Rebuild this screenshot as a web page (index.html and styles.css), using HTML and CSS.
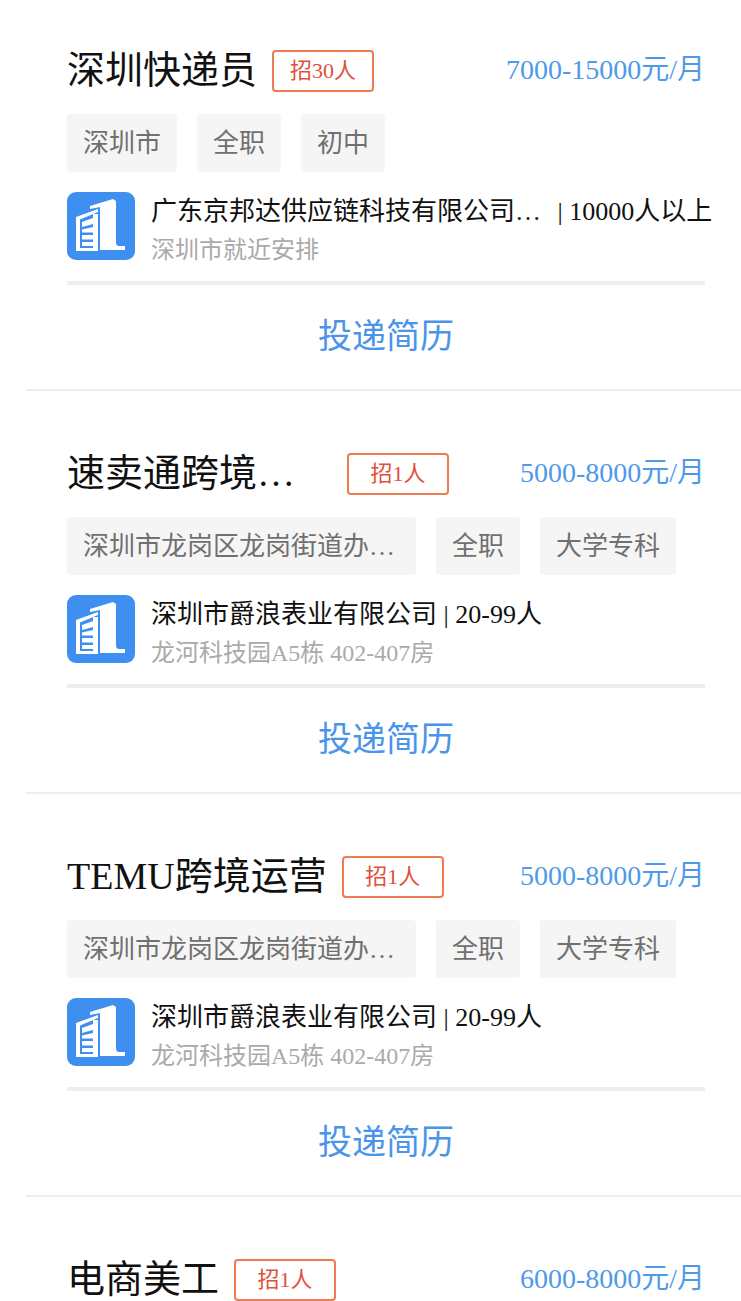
FILE: index.html
```html
<!DOCTYPE html>
<html lang="zh">
  <head>
    <meta charset="utf-8">
    <title>职位列表</title>
    <link rel="stylesheet" href="styles.css">
  </head>
  <body>
  <svg class="icon-defs">
    <symbol id="building" viewBox="0 0 68 68">
      <rect width="68" height="68" rx="9" fill="#3f8ff0"/>
      <g fill="#fff">
        <path d="M9 59V25L31 17V20L13 27.500V59Z"/>
        <path d="M15 30L26 26V32L15 35Z"/>
        <path d="M15 37.500L26 35V40.500H15Z"/>
        <path d="M15 43H26V47.500H15Z"/>
        <path d="M15 50H26V54H15Z"/>
        <path d="M9 56H31V59H9Z"/>
        <path d="M26 22H31V59H26Z"/>
        <path d="M23 14L46 7L49 9V50Q49 54 52 54H58V58H33V15L23 17Z"/>
      </g>
    </symbol>
  </svg>
  <div class="job-list">

    <div class="job">
      <div class="job-head">
        <span class="job-title">深圳快递员</span>
        <span class="job-count">招30人</span>
        <span class="job-pay">7000-15000元/月</span>
      </div>
      <div class="job-tags">
        <span class="tag">深圳市</span>
        <span class="tag">全职</span>
        <span class="tag">初中</span>
      </div>
      <div class="company">
        <svg class="company-logo"><use href="#building"/></svg>
        <div class="company-info">
          <div class="company-name"><span class="company-short">广东京邦达供应链科技有限公司深圳分公司</span> | 10000人以上</div>
          <div class="company-addr">深圳市就近安排</div>
        </div>
      </div>
      <div class="job-apply">投递简历</div>
    </div>

    <div class="job">
      <div class="job-head">
        <span class="job-title">速卖通跨境电商运营</span>
        <span class="job-count">招1人</span>
        <span class="job-pay">5000-8000元/月</span>
      </div>
      <div class="job-tags">
        <span class="tag">深圳市龙岗区龙岗街道办事处南联社区</span>
        <span class="tag">全职</span>
        <span class="tag">大学专科</span>
      </div>
      <div class="company">
        <svg class="company-logo"><use href="#building"/></svg>
        <div class="company-info">
          <div class="company-name"><span class="company-short">深圳市爵浪表业有限公司</span> | 20-99人</div>
          <div class="company-addr">龙河科技园A5栋 402-407房</div>
        </div>
      </div>
      <div class="job-apply">投递简历</div>
    </div>

    <div class="job">
      <div class="job-head">
        <span class="job-title">TEMU跨境运营</span>
        <span class="job-count">招1人</span>
        <span class="job-pay">5000-8000元/月</span>
      </div>
      <div class="job-tags">
        <span class="tag">深圳市龙岗区龙岗街道办事处南联社区</span>
        <span class="tag">全职</span>
        <span class="tag">大学专科</span>
      </div>
      <div class="company">
        <svg class="company-logo"><use href="#building"/></svg>
        <div class="company-info">
          <div class="company-name"><span class="company-short">深圳市爵浪表业有限公司</span> | 20-99人</div>
          <div class="company-addr">龙河科技园A5栋 402-407房</div>
        </div>
      </div>
      <div class="job-apply">投递简历</div>
    </div>

    <div class="job">
      <div class="job-head">
        <span class="job-title">电商美工</span>
        <span class="job-count">招1人</span>
        <span class="job-pay">6000-8000元/月</span>
      </div>
    </div>

  </div>
  </body>
</html>
```

FILE: styles.css
```css
html, body {
  margin: 0;
  height: 1301px;
  overflow: hidden;
  background: #fff;
}

body {
  font-family: "Liberation Serif", "Noto Sans CJK SC", serif;
}

.icon-defs {
  display: none;
}

.job-list {
  padding-top: 44px;
  margin-left: 26px;
}

.job {
  padding: 0 36px 0 41px;
  margin-bottom: 56px;
  border-bottom: 2px solid #eeeeee;
}

.job-head {
  display: flex;
  align-items: center;
  height: 52px;
}

.job-title {
  max-width: 265px;
  font-size: 38px;
  line-height: 52px;
  color: #111;
  white-space: nowrap;
  overflow: hidden;
  text-overflow: ellipsis;
}

.job-count {
  box-sizing: border-box;
  width: 102px;
  height: 42px;
  margin: 2px 0 0 15px;
  border: 2px solid #ee7b52;
  border-radius: 4px;
  font-size: 22px;
  line-height: 38px;
  text-align: center;
  color: #e0503c;
}

.job-pay {
  margin-left: auto;
  margin-top: -7px;
  font-size: 28px;
  color: #4f9ae8;
  white-space: nowrap;
}

.job-tags {
  display: flex;
  gap: 20px;
  margin-top: 18px;
}

.tag {
  max-width: 317px;
  padding: 0 16px;
  height: 58px;
  line-height: 60px;
  font-size: 26px;
  color: #707070;
  background: #f5f5f5;
  border-radius: 4px;
  white-space: nowrap;
  overflow: hidden;
  text-overflow: ellipsis;
}

.company {
  display: flex;
  height: 68px;
  margin-top: 20px;
  padding-bottom: 21px;
  border-bottom: 4px solid #eeeeee;
}

.company-logo {
  width: 68px;
  height: 68px;
  flex: none;
}

.company-info {
  height: 68px;
  margin-left: 16px;
  padding-top: 3px;
  box-sizing: border-box;
  white-space: nowrap;
}

.company-name {
  display: flex;
  font-size: 26px;
  line-height: 34px;
  color: #111;
  white-space: pre;
}

.company-short {
  max-width: 400px;
  overflow: hidden;
  text-overflow: ellipsis;
}

.company-addr {
  font-size: 24px;
  line-height: 34px;
  margin-top: 4px;
  color: #aaa;
}

.job-apply {
  height: 104px;
  line-height: 103px;
  font-size: 34px;
  text-align: center;
  color: #4a94ea;
}
```
